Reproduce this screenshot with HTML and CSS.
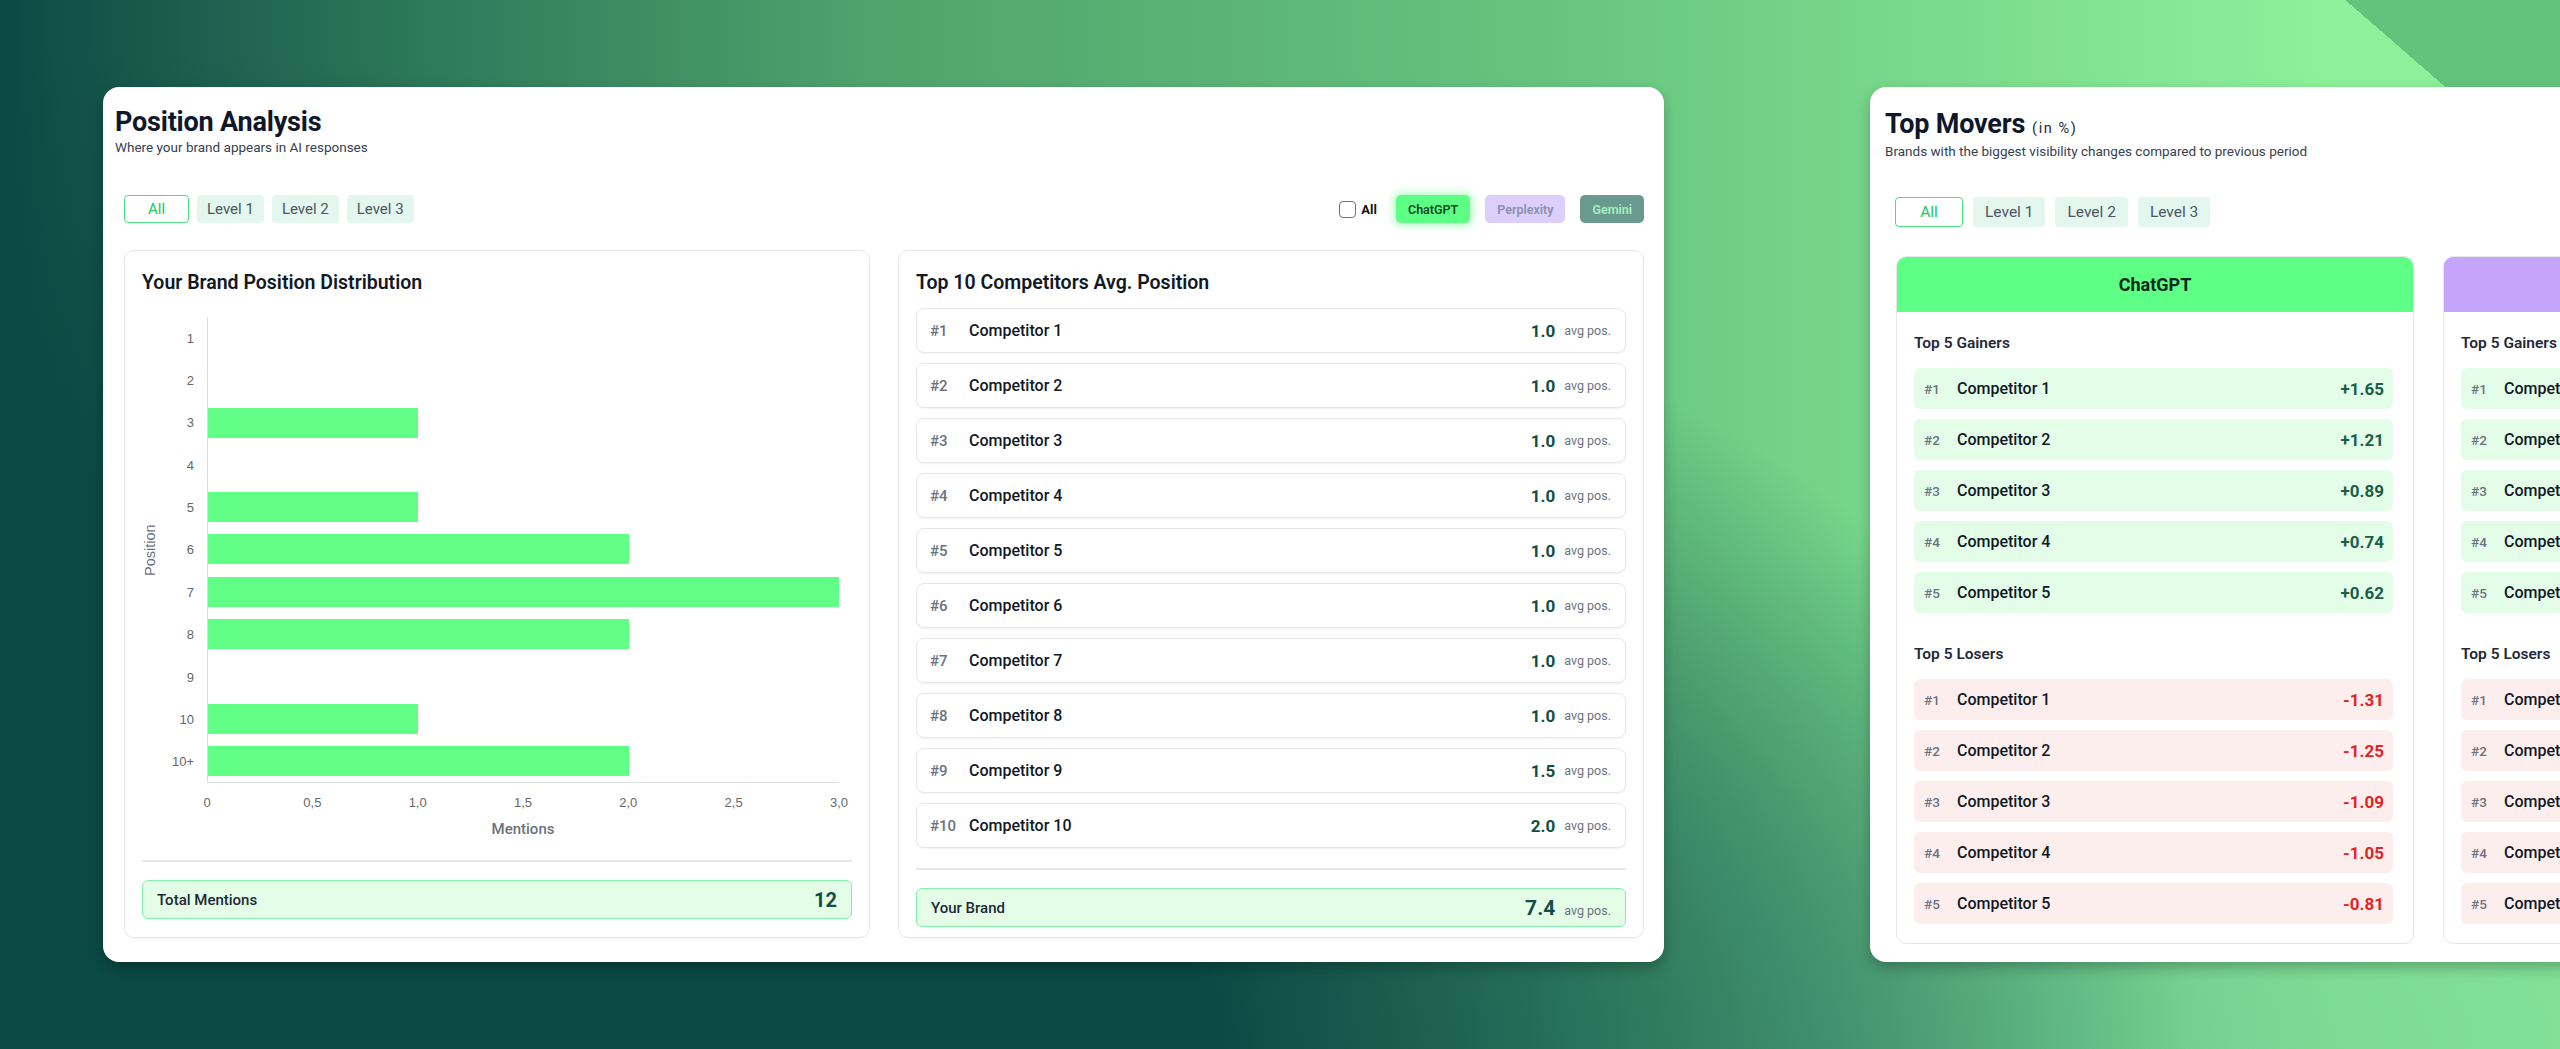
FILE: index.html
```html
<!DOCTYPE html>
<html lang="en">
<head>
<meta charset="utf-8">
<title>Position Analysis &amp; Top Movers</title>
<link rel="stylesheet" href="styles.css">
</head>
<body>
<div class="track">

  <section class="card card-position">
    <header class="card-head">
      <h1 class="card-title">Position Analysis</h1>
      <p class="card-sub">Where your brand appears in AI responses</p>
    </header>

    <div class="toolbar">
      <div class="chips">
        <button class="chip chip-active">All</button>
        <button class="chip">Level 1</button>
        <button class="chip">Level 2</button>
        <button class="chip">Level 3</button>
      </div>
      <div class="models">
        <label class="check"><span class="check-box"></span>All</label>
        <button class="model model-chatgpt">ChatGPT</button>
        <button class="model model-perplexity">Perplexity</button>
        <button class="model model-gemini">Gemini</button>
      </div>
    </div>

    <div class="panels">
      <div class="panel">
        <h2 class="panel-title">Your Brand Position Distribution</h2>
        <div class="chart">
          <div class="y-title">Position</div>
          <div class="y-labels">
            <span>1</span><span>2</span><span>3</span><span>4</span><span>5</span><span>6</span><span>7</span><span>8</span><span>9</span><span>10</span><span>10+</span>
          </div>
          <div class="plot">
            <div class="plot-row"><div class="bar" style="width:0%"></div></div>
            <div class="plot-row"><div class="bar" style="width:0%"></div></div>
            <div class="plot-row"><div class="bar" style="width:33.333%"></div></div>
            <div class="plot-row"><div class="bar" style="width:0%"></div></div>
            <div class="plot-row"><div class="bar" style="width:33.333%"></div></div>
            <div class="plot-row"><div class="bar" style="width:66.667%"></div></div>
            <div class="plot-row"><div class="bar" style="width:100%"></div></div>
            <div class="plot-row"><div class="bar" style="width:66.667%"></div></div>
            <div class="plot-row"><div class="bar" style="width:0%"></div></div>
            <div class="plot-row"><div class="bar" style="width:33.333%"></div></div>
            <div class="plot-row"><div class="bar" style="width:66.667%"></div></div>
          </div>
          <div class="x-ticks">
            <span class="tick">0</span><span class="tick">0,5</span><span class="tick">1,0</span><span class="tick">1,5</span><span class="tick">2,0</span><span class="tick">2,5</span><span class="tick">3,0</span>
          </div>
          <div class="x-title">Mentions</div>
        </div>
        <div class="divider"></div>
        <div class="summary">
          <span class="summary-label">Total Mentions</span>
          <span class="summary-value">12</span>
        </div>
      </div>

      <div class="panel">
        <h2 class="panel-title">Top 10 Competitors Avg. Position</h2>
        <div class="comp-list">
          <div class="comp"><span class="comp-rank">#1</span><span class="comp-name">Competitor 1</span><span class="comp-val">1.0</span><span class="comp-unit">avg pos.</span></div>
          <div class="comp"><span class="comp-rank">#2</span><span class="comp-name">Competitor 2</span><span class="comp-val">1.0</span><span class="comp-unit">avg pos.</span></div>
          <div class="comp"><span class="comp-rank">#3</span><span class="comp-name">Competitor 3</span><span class="comp-val">1.0</span><span class="comp-unit">avg pos.</span></div>
          <div class="comp"><span class="comp-rank">#4</span><span class="comp-name">Competitor 4</span><span class="comp-val">1.0</span><span class="comp-unit">avg pos.</span></div>
          <div class="comp"><span class="comp-rank">#5</span><span class="comp-name">Competitor 5</span><span class="comp-val">1.0</span><span class="comp-unit">avg pos.</span></div>
          <div class="comp"><span class="comp-rank">#6</span><span class="comp-name">Competitor 6</span><span class="comp-val">1.0</span><span class="comp-unit">avg pos.</span></div>
          <div class="comp"><span class="comp-rank">#7</span><span class="comp-name">Competitor 7</span><span class="comp-val">1.0</span><span class="comp-unit">avg pos.</span></div>
          <div class="comp"><span class="comp-rank">#8</span><span class="comp-name">Competitor 8</span><span class="comp-val">1.0</span><span class="comp-unit">avg pos.</span></div>
          <div class="comp"><span class="comp-rank">#9</span><span class="comp-name">Competitor 9</span><span class="comp-val">1.5</span><span class="comp-unit">avg pos.</span></div>
          <div class="comp"><span class="comp-rank">#10</span><span class="comp-name">Competitor 10</span><span class="comp-val">2.0</span><span class="comp-unit">avg pos.</span></div>
        </div>
        <div class="divider divider-comp"></div>
        <div class="summary">
          <span class="summary-label">Your Brand</span>
          <span class="summary-right"><span class="summary-value summary-value-lg">7.4</span><span class="comp-unit">avg pos.</span></span>
        </div>
      </div>
    </div>
  </section>

  <section class="card card-movers">
    <header class="card-head">
      <h1 class="card-title card-title-row">Top Movers <span class="card-title-note">(in %)</span></h1>
      <p class="card-sub">Brands with the biggest visibility changes compared to previous period</p>
    </header>

    <div class="chips chips-movers">
      <button class="chip chip-lg chip-active">All</button>
      <button class="chip chip-lg">Level 1</button>
      <button class="chip chip-lg">Level 2</button>
      <button class="chip chip-lg">Level 3</button>
    </div>

    <div class="columns">
      <div class="col">
        <div class="col-head col-head-chatgpt">ChatGPT</div>
        <div class="col-body">
          <h3 class="sec-title">Top 5 Gainers</h3>
          <div class="mv-list">
            <div class="mv"><span class="mv-rank">#1</span><span class="mv-name">Competitor 1</span><span class="mv-val">+1.65</span></div>
            <div class="mv"><span class="mv-rank">#2</span><span class="mv-name">Competitor 2</span><span class="mv-val">+1.21</span></div>
            <div class="mv"><span class="mv-rank">#3</span><span class="mv-name">Competitor 3</span><span class="mv-val">+0.89</span></div>
            <div class="mv"><span class="mv-rank">#4</span><span class="mv-name">Competitor 4</span><span class="mv-val">+0.74</span></div>
            <div class="mv"><span class="mv-rank">#5</span><span class="mv-name">Competitor 5</span><span class="mv-val">+0.62</span></div>
          </div>
          <h3 class="sec-title sec-title-second">Top 5 Losers</h3>
          <div class="mv-list mv-list-losers">
            <div class="mv"><span class="mv-rank">#1</span><span class="mv-name">Competitor 1</span><span class="mv-val">-1.31</span></div>
            <div class="mv"><span class="mv-rank">#2</span><span class="mv-name">Competitor 2</span><span class="mv-val">-1.25</span></div>
            <div class="mv"><span class="mv-rank">#3</span><span class="mv-name">Competitor 3</span><span class="mv-val">-1.09</span></div>
            <div class="mv"><span class="mv-rank">#4</span><span class="mv-name">Competitor 4</span><span class="mv-val">-1.05</span></div>
            <div class="mv"><span class="mv-rank">#5</span><span class="mv-name">Competitor 5</span><span class="mv-val">-0.81</span></div>
          </div>
        </div>
      </div>

      <div class="col">
        <div class="col-head col-head-perplexity">Perplexity</div>
        <div class="col-body">
          <h3 class="sec-title">Top 5 Gainers</h3>
          <div class="mv-list">
            <div class="mv"><span class="mv-rank">#1</span><span class="mv-name">Competitor 1</span><span class="mv-val">+1.48</span></div>
            <div class="mv"><span class="mv-rank">#2</span><span class="mv-name">Competitor 2</span><span class="mv-val">+1.12</span></div>
            <div class="mv"><span class="mv-rank">#3</span><span class="mv-name">Competitor 3</span><span class="mv-val">+0.93</span></div>
            <div class="mv"><span class="mv-rank">#4</span><span class="mv-name">Competitor 4</span><span class="mv-val">+0.70</span></div>
            <div class="mv"><span class="mv-rank">#5</span><span class="mv-name">Competitor 5</span><span class="mv-val">+0.55</span></div>
          </div>
          <h3 class="sec-title sec-title-second">Top 5 Losers</h3>
          <div class="mv-list mv-list-losers">
            <div class="mv"><span class="mv-rank">#1</span><span class="mv-name">Competitor 1</span><span class="mv-val">-1.40</span></div>
            <div class="mv"><span class="mv-rank">#2</span><span class="mv-name">Competitor 2</span><span class="mv-val">-1.18</span></div>
            <div class="mv"><span class="mv-rank">#3</span><span class="mv-name">Competitor 3</span><span class="mv-val">-0.97</span></div>
            <div class="mv"><span class="mv-rank">#4</span><span class="mv-name">Competitor 4</span><span class="mv-val">-0.88</span></div>
            <div class="mv"><span class="mv-rank">#5</span><span class="mv-name">Competitor 5</span><span class="mv-val">-0.64</span></div>
          </div>
        </div>
      </div>

      <div class="col">
        <div class="col-head col-head-gemini">Gemini</div>
        <div class="col-body">
          <h3 class="sec-title">Top 5 Gainers</h3>
          <div class="mv-list">
            <div class="mv"><span class="mv-rank">#1</span><span class="mv-name">Competitor 1</span><span class="mv-val">+1.30</span></div>
            <div class="mv"><span class="mv-rank">#2</span><span class="mv-name">Competitor 2</span><span class="mv-val">+1.02</span></div>
            <div class="mv"><span class="mv-rank">#3</span><span class="mv-name">Competitor 3</span><span class="mv-val">+0.81</span></div>
            <div class="mv"><span class="mv-rank">#4</span><span class="mv-name">Competitor 4</span><span class="mv-val">+0.66</span></div>
            <div class="mv"><span class="mv-rank">#5</span><span class="mv-name">Competitor 5</span><span class="mv-val">+0.51</span></div>
          </div>
          <h3 class="sec-title sec-title-second">Top 5 Losers</h3>
          <div class="mv-list mv-list-losers">
            <div class="mv"><span class="mv-rank">#1</span><span class="mv-name">Competitor 1</span><span class="mv-val">-1.22</span></div>
            <div class="mv"><span class="mv-rank">#2</span><span class="mv-name">Competitor 2</span><span class="mv-val">-1.07</span></div>
            <div class="mv"><span class="mv-rank">#3</span><span class="mv-name">Competitor 3</span><span class="mv-val">-0.90</span></div>
            <div class="mv"><span class="mv-rank">#4</span><span class="mv-name">Competitor 4</span><span class="mv-val">-0.77</span></div>
            <div class="mv"><span class="mv-rank">#5</span><span class="mv-name">Competitor 5</span><span class="mv-val">-0.60</span></div>
          </div>
        </div>
      </div>
    </div>
  </section>

</div>
</body>
</html>
```
FILE: styles.css
```css
* { box-sizing: border-box; }

html, body { margin: 0; padding: 0; }

body {
  width: 2560px;
  height: 1049px;
  overflow: hidden;
  font-family: Roboto, "Liberation Sans", Arial, sans-serif;
  color: #111827;
  background:
    linear-gradient(41deg, rgba(100, 195, 123, 0) 94.3%, #64c37b 94.3%),
    radial-gradient(ellipse 2200px 1000px at 0% 100%, #0b4a45 0%, #0b4a45 55%, rgba(11, 74, 69, 0) 100%),
    radial-gradient(ellipse 1400px 500px at 70% 100%, rgba(60, 140, 130, 0.35) 0%, rgba(60, 140, 130, 0) 100%),
    linear-gradient(90deg, #0b4a45 0%, #2f7a5a 17%, #4fa36c 34%, #66c47e 60%, #8ef09a 91%);
}

.track {
  display: flex;
  gap: 206px;
  padding: 87px 0 0 103px;
}

.card {
  flex: 0 0 1561px;
  height: 875px;
  background: #ffffff;
  border-radius: 16px;
  box-shadow: 0 6px 14px rgba(0, 0, 0, 0.25);
  display: flex;
  flex-direction: column;
}

.card-position { padding: 19px 20px 25px 12px; }
.card-movers { padding: 21px 0 18px 15px; overflow: hidden; }

.card-title {
  margin: 0;
  font-size: 27px;
  line-height: 32px;
  font-weight: 700;
  color: #0f172a;
  letter-spacing: -0.2px;
}

.card-title-row {
  display: flex;
  align-items: baseline;
  gap: 7px;
}

.card-title-note {
  font-size: 14.5px;
  line-height: 16px;
  font-weight: 400;
  letter-spacing: 1.6px;
  color: #1f2937;
}

.card-sub {
  margin: 0;
  font-size: 13.5px;
  line-height: 18px;
  color: #374151;
}

.card-movers .card-sub { margin-top: 2px; }

/* toolbar */
.toolbar {
  margin: 39px 0 0 9px;
  height: 28px;
  display: flex;
  justify-content: space-between;
  align-items: center;
}

.chips { display: flex; gap: 8px; }

.chip {
  height: 28px;
  padding: 0 10px;
  min-width: 65px;
  border: none;
  border-radius: 4px;
  background: #e4f7ee;
  color: #4b5563;
  font-family: inherit;
  font-size: 15px;
  display: flex;
  align-items: center;
  justify-content: center;
}

.chip-active {
  background: #ffffff;
  border: 1.5px solid #4ade80;
  color: #22c55e;
}

.chips-movers { margin: 37px 0 0 10px; gap: 10px; }

.chip-lg {
  height: 30px;
  min-width: 68px;
  padding: 0 12px;
  font-size: 15.5px;
}

.models { display: flex; align-items: center; gap: 15px; }

.check {
  display: flex;
  align-items: center;
  gap: 5px;
  margin-right: 4px;
  font-size: 13px;
  font-weight: 700;
  color: #111111;
}

.check-box {
  width: 17px;
  height: 17px;
  border: 1.5px solid #6b7280;
  border-radius: 4px;
  background: #ffffff;
}

.model {
  height: 28px;
  padding: 0 12px;
  border: none;
  border-radius: 5px;
  font-family: inherit;
  font-size: 12.5px;
  font-weight: 600;
}

.model-chatgpt {
  background: #5eff85;
  color: #0d4a2a;
  box-shadow: 0 0 9px 2px rgba(94, 255, 133, 0.55);
}

.model-perplexity { background: #dccffc; color: #8a8fb0; }
.model-gemini { background: #6a9a8f; color: #a8efc0; }

/* panels */
.panels {
  flex: 1;
  margin: 27px 0 0 9px;
  display: grid;
  grid-template-columns: 1fr 1fr;
  gap: 28px;
}

.panel {
  border: 1px solid #e5e7eb;
  border-radius: 10px;
  padding: 20px 17px 10px 17px;
  box-shadow: 0 1px 3px rgba(0, 0, 0, 0.04);
  display: flex;
  flex-direction: column;
}

.panel-title {
  margin: 0;
  font-size: 19.5px;
  line-height: 24px;
  font-weight: 600;
  color: #111827;
}

/* chart */
.chart {
  margin-top: 22px;
  display: grid;
  grid-template-columns: 28px 37px 1fr;
  grid-template-rows: 466px auto auto;
}

.y-title {
  grid-column: 1;
  grid-row: 1;
  writing-mode: vertical-rl;
  transform: rotate(180deg);
  text-align: center;
  font-family: "Liberation Sans", Arial, sans-serif;
  font-size: 14.5px;
  color: #6b7280;
}

.y-labels {
  grid-column: 2;
  grid-row: 1;
  display: flex;
  flex-direction: column;
  padding-right: 13px;
}

.y-labels span {
  flex: 1;
  display: flex;
  align-items: center;
  justify-content: flex-end;
  font-family: "Liberation Sans", Arial, sans-serif;
  font-size: 13px;
  color: #666666;
}

.plot {
  grid-column: 3;
  grid-row: 1;
  margin-right: 13px;
  border-left: 1px solid #d9dce1;
  border-bottom: 1px solid #d9dce1;
  display: flex;
  flex-direction: column;
}

.plot-row {
  flex: 1;
  display: flex;
  align-items: center;
}

.bar {
  height: 30px;
  background: #61ff86;
}

.x-ticks {
  grid-column: 3;
  grid-row: 2;
  margin-right: 13px;
  padding-top: 12px;
  display: flex;
  justify-content: space-between;
}

.tick {
  width: 0;
  display: flex;
  justify-content: center;
  white-space: nowrap;
  line-height: 16px;
  font-family: "Liberation Sans", Arial, sans-serif;
  font-size: 13px;
  color: #666666;
}

.x-title {
  grid-column: 3;
  grid-row: 3;
  margin: 9px 13px 0 0;
  text-align: center;
  line-height: 18px;
  font-size: 15px;
  font-weight: 500;
  color: #6b7280;
}

.divider {
  margin-top: 22px;
  height: 2px;
  background: #e5e7eb;
}

.divider-comp { margin-top: 20px; }

.summary {
  margin-top: 18px;
  height: 39px;
  border: 1.5px solid #86efac;
  border-radius: 6px;
  background: #e3fde7;
  display: flex;
  align-items: center;
  justify-content: space-between;
  padding: 0 14px;
}

.summary-label { font-size: 15px; font-weight: 500; color: #1f2937; }

.summary-value { font-size: 20px; font-weight: 700; color: #134e4a; }
.summary-value-lg { font-size: 21px; }

.summary-right { display: flex; align-items: baseline; }

/* competitor list */
.comp-list {
  margin-top: 13px;
  display: flex;
  flex-direction: column;
  gap: 10px;
}

.comp {
  height: 45px;
  border: 1px solid #e5e7eb;
  border-radius: 8px;
  box-shadow: 0 1px 2px rgba(0, 0, 0, 0.05);
  display: flex;
  align-items: center;
  padding: 0 14px 0 13px;
}

.comp-rank { width: 39px; font-size: 15px; font-weight: 500; color: #6b7280; }
.comp-name { flex: 1; font-size: 16px; font-weight: 500; color: #111827; }
.comp-val { font-size: 17px; font-weight: 700; color: #0f4f45; }
.comp-unit { margin-left: 9px; font-size: 12.5px; color: #6b7280; }

/* movers */
.columns {
  flex: 1;
  margin: 29px 0 0 11px;
  display: flex;
  gap: 29px;
}

.col {
  flex: 0 0 518px;
  border: 1px solid #e5e7eb;
  border-radius: 10px;
  overflow: hidden;
  display: flex;
  flex-direction: column;
}

.col-head {
  height: 55px;
  display: flex;
  align-items: center;
  justify-content: center;
  font-size: 18px;
  font-weight: 700;
  color: #0d2b1c;
}

.col-head-chatgpt { background: #5eff85; }
.col-head-perplexity { background: #c4a5fb; }
.col-head-gemini { background: #6b9a8c; }

.col-body { padding: 21px 20px 18px 17px; }

.sec-title {
  margin: 0;
  font-size: 15.5px;
  line-height: 20px;
  font-weight: 600;
  color: #1f2937;
}

.sec-title-second { margin-top: 31px; }

.mv-list {
  margin-top: 15px;
  display: flex;
  flex-direction: column;
  gap: 10px;
}

.mv {
  height: 41px;
  border-radius: 6px;
  background: #e3fde8;
  display: flex;
  align-items: center;
  padding: 0 9px 0 10px;
}

.mv-rank { width: 33px; font-size: 13.5px; font-weight: 500; color: #6b7280; }
.mv-name { flex: 1; font-size: 16px; font-weight: 500; color: #111827; }
.mv-val { font-size: 17px; font-weight: 700; color: #1b5e45; }

.mv-list-losers .mv { background: #fdeeee; }
.mv-list-losers .mv-val { color: #dc2626; }
```
